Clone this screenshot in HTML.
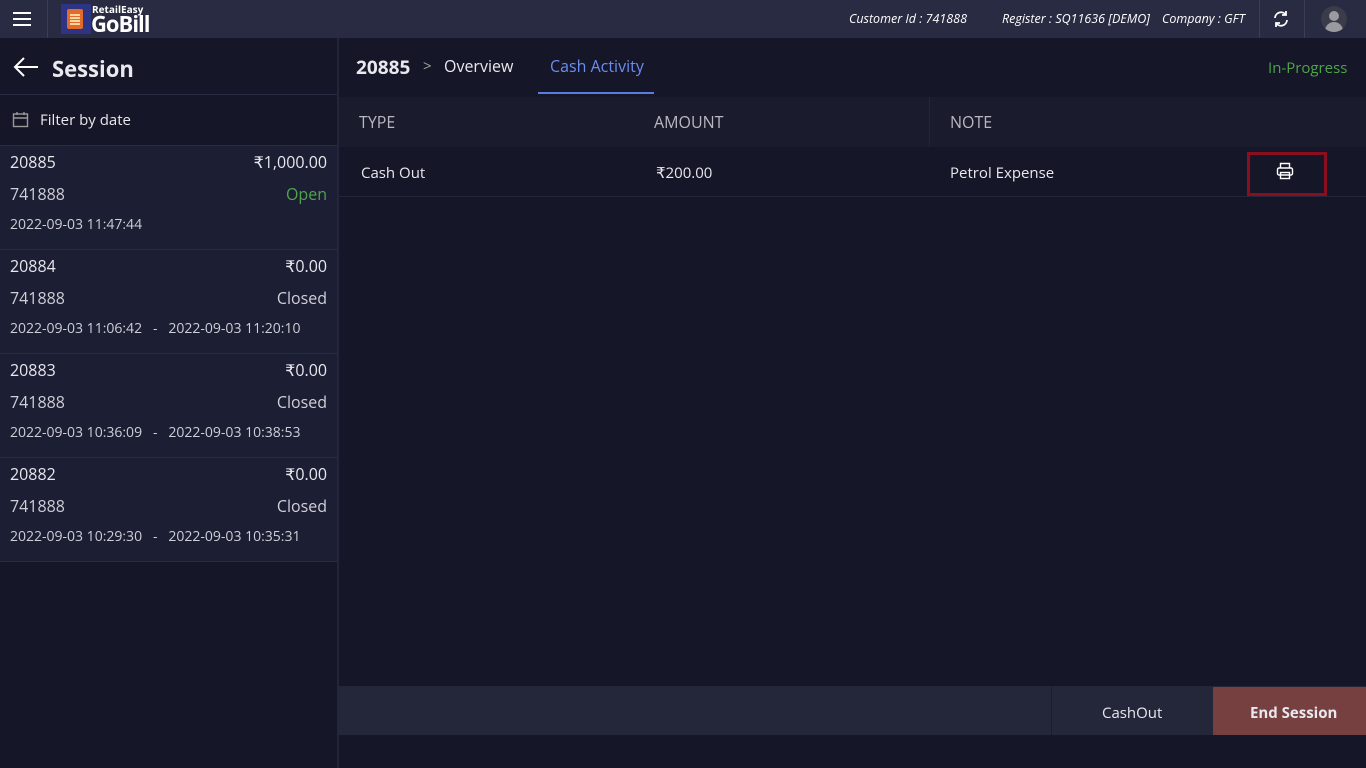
<!DOCTYPE html>
<html><head><meta charset="utf-8"><style>
*{box-sizing:border-box;margin:0;padding:0}
body{width:1366px;height:768px;background:#151627;font-family:"Open Sans","Liberation Sans","DejaVu Sans",sans-serif;color:#e8e8ee;position:relative;overflow:hidden}
.abs{position:absolute}
.top{left:0;top:0;width:1366px;height:38px;background:#282b42}
.it{font-style:italic;font-size:12.5px;color:#fff;top:10px}
.left{left:0;top:38px;width:339px;height:730px;background:#151627;border-right:2px solid #23253a}
.item{position:absolute;left:0;width:337px;height:104px;background:#1c1e33;border-bottom:1px solid #2a2c44}
.item .a{position:absolute;left:10px;top:5px;font-size:16px}
.item .b{position:absolute;right:10px;top:5px;font-size:16px}
.item .c{position:absolute;left:10px;top:37px;font-size:16px;color:#d0d0d8}
.item .d{position:absolute;right:10px;top:37px;font-size:16px;color:#d0d0d8}
.item .e{position:absolute;left:10px;top:69px;font-size:14px;color:#d0d0d8;white-space:pre}
</style></head><body>
<div class="abs top"></div>
<div class="abs" style="left:13px;top:12px;width:18px;height:2px;background:#fff;box-shadow:0 6px 0 #fff,0 12px 0 #fff"></div>
<div class="abs" style="left:47px;top:0;width:1px;height:38px;background:#3a3d55"></div>
<div class="abs" style="left:61px;top:4px;width:30px;height:30px;background:#2c3483"></div>
<div class="abs" style="left:67px;top:9px;width:16px;height:20px;background:#e26a2c;border-radius:2px"></div>
<div class="abs" style="left:70px;top:14px;width:10px;height:2px;background:#fbd7a0;box-shadow:0 3px 0 #fbd7a0,0 6px 0 #fbd7a0,0 9px 0 #fbd7a0"></div>
<div class="abs" style="left:92px;top:2px;font-size:10px;font-weight:bold;color:#fff">RetailEasy</div>
<div class="abs" style="left:91px;top:9px;font-size:22px;font-weight:bold;color:#fff;letter-spacing:-1px">GoBill</div>
<div class="abs it" style="left:849px">Customer Id : 741888</div>
<div class="abs it" style="left:1002px">Register : SQ11636 [DEMO]</div>
<div class="abs it" style="left:1162px">Company : GFT</div>
<div class="abs" style="left:1259px;top:0;width:1px;height:38px;background:#3a3d55"></div>
<div class="abs" style="left:1304px;top:0;width:1px;height:38px;background:#3a3d55"></div>
<svg class="abs" style="left:1272px;top:10px" width="18" height="18" viewBox="0 0 18 18" fill="none" stroke="#fff" stroke-width="1.8"><path d="M3 8a6 6 0 0 1 11-3M15 10a6 6 0 0 1-11 3"/><path d="M14 1v4h-4M4 17v-4h4"/></svg>
<div class="abs" style="left:1321px;top:6px;width:26px;height:26px;border-radius:50%;background:#3a3c4a;overflow:hidden"><div class="abs" style="left:8px;top:5px;width:10px;height:10px;border-radius:50%;background:#9a9aa0"></div><div class="abs" style="left:4px;top:16px;width:18px;height:14px;border-radius:9px 9px 0 0;background:#9a9aa0"></div></div>

<div class="abs left"></div>
<div class="abs" style="left:0;top:94px;width:337px;height:1px;background:#2a2c44"></div>
<svg class="abs" style="left:13px;top:57px" width="26" height="20" viewBox="0 0 26 20" fill="none" stroke="#fff" stroke-width="2"><path d="M2 10h23M11 1L2 10l9 9"/></svg>
<div class="abs" style="left:52px;top:54px;font-size:22px;font-weight:bold">Session</div>
<svg class="abs" style="left:12px;top:111px" width="17" height="17" viewBox="0 0 17 17" fill="none" stroke="#999" stroke-width="1.4"><rect x="1.5" y="3" width="14" height="12.5"/><path d="M1.5 7h14M5 1v3M12 1v3"/></svg>
<div class="abs" style="left:40px;top:110px;font-size:15px">Filter by date</div>
<div class="abs" style="left:0;top:145px;width:337px;height:1px;background:#2a2c44"></div>
<div class="item" style="top:146px"><span class="a">20885</span><span class="b">₹1,000.00</span><span class="c">741888</span><span class="d" style="color:#4ea54a">Open</span><span class="e">2022-09-03 11:47:44</span></div>
<div class="item" style="top:250px"><span class="a">20884</span><span class="b">₹0.00</span><span class="c">741888</span><span class="d">Closed</span><span class="e">2022-09-03 11:06:42   -   2022-09-03 11:20:10</span></div>
<div class="item" style="top:354px"><span class="a">20883</span><span class="b">₹0.00</span><span class="c">741888</span><span class="d">Closed</span><span class="e">2022-09-03 10:36:09   -   2022-09-03 10:38:53</span></div>
<div class="item" style="top:458px"><span class="a">20882</span><span class="b">₹0.00</span><span class="c">741888</span><span class="d">Closed</span><span class="e">2022-09-03 10:29:30   -   2022-09-03 10:35:31</span></div>

<div class="abs" style="left:356px;top:54px;font-size:19px;font-weight:bold">20885</div>
<div class="abs" style="left:423px;top:56px;font-size:15px;color:#aaa">&gt;</div>
<div class="abs" style="left:444px;top:55px;font-size:16px">Overview</div>
<div class="abs" style="left:550px;top:55px;font-size:16px;color:#6b8cf0">Cash Activity</div>
<div class="abs" style="left:538px;top:92px;width:116px;height:2px;background:#5a7de0"></div>
<div class="abs" style="left:1268px;top:58px;font-size:15px;color:#4ea54a">In-Progress</div>
<div class="abs" style="left:339px;top:97px;width:1027px;height:50px;background:#1a1c2e"></div>
<div class="abs" style="left:929px;top:97px;width:1px;height:50px;background:#23253a"></div>
<div class="abs" style="left:359px;top:111px;font-size:16px;color:#b8b8c0">TYPE</div>
<div class="abs" style="left:654px;top:111px;font-size:16px;color:#b8b8c0">AMOUNT</div>
<div class="abs" style="left:950px;top:111px;font-size:16px;color:#b8b8c0">NOTE</div>
<div class="abs" style="left:339px;top:196px;width:1027px;height:1px;background:#23253a"></div>
<div class="abs" style="left:361px;top:163px;font-size:15px">Cash Out</div>
<div class="abs" style="left:656px;top:163px;font-size:15px">₹200.00</div>
<div class="abs" style="left:950px;top:163px;font-size:15px">Petrol Expense</div>
<div class="abs" style="left:1247px;top:152px;width:80px;height:44px;border:3px solid #8b0e1e"></div>
<svg class="abs" style="left:1276px;top:162px" width="18" height="18" viewBox="0 0 18 18" fill="none" stroke="#fff" stroke-width="1.4"><path d="M4.5 6V1.5h9V6"/><rect x="1.5" y="6" width="15" height="7" rx="1.5"/><rect x="4.5" y="10.5" width="9" height="6"/></svg>

<div class="abs" style="left:339px;top:686px;width:1027px;height:49px;background:#24263a"></div>
<div class="abs" style="left:1051px;top:686px;width:1px;height:49px;background:#1c1e30"></div>
<div class="abs" style="left:1102px;top:703px;font-size:15px">CashOut</div>
<div class="abs" style="left:1213px;top:687px;width:153px;height:48px;background:#75403f"></div>
<div class="abs" style="left:1250px;top:703px;font-size:15px;font-weight:bold">End Session</div>
</body></html>
